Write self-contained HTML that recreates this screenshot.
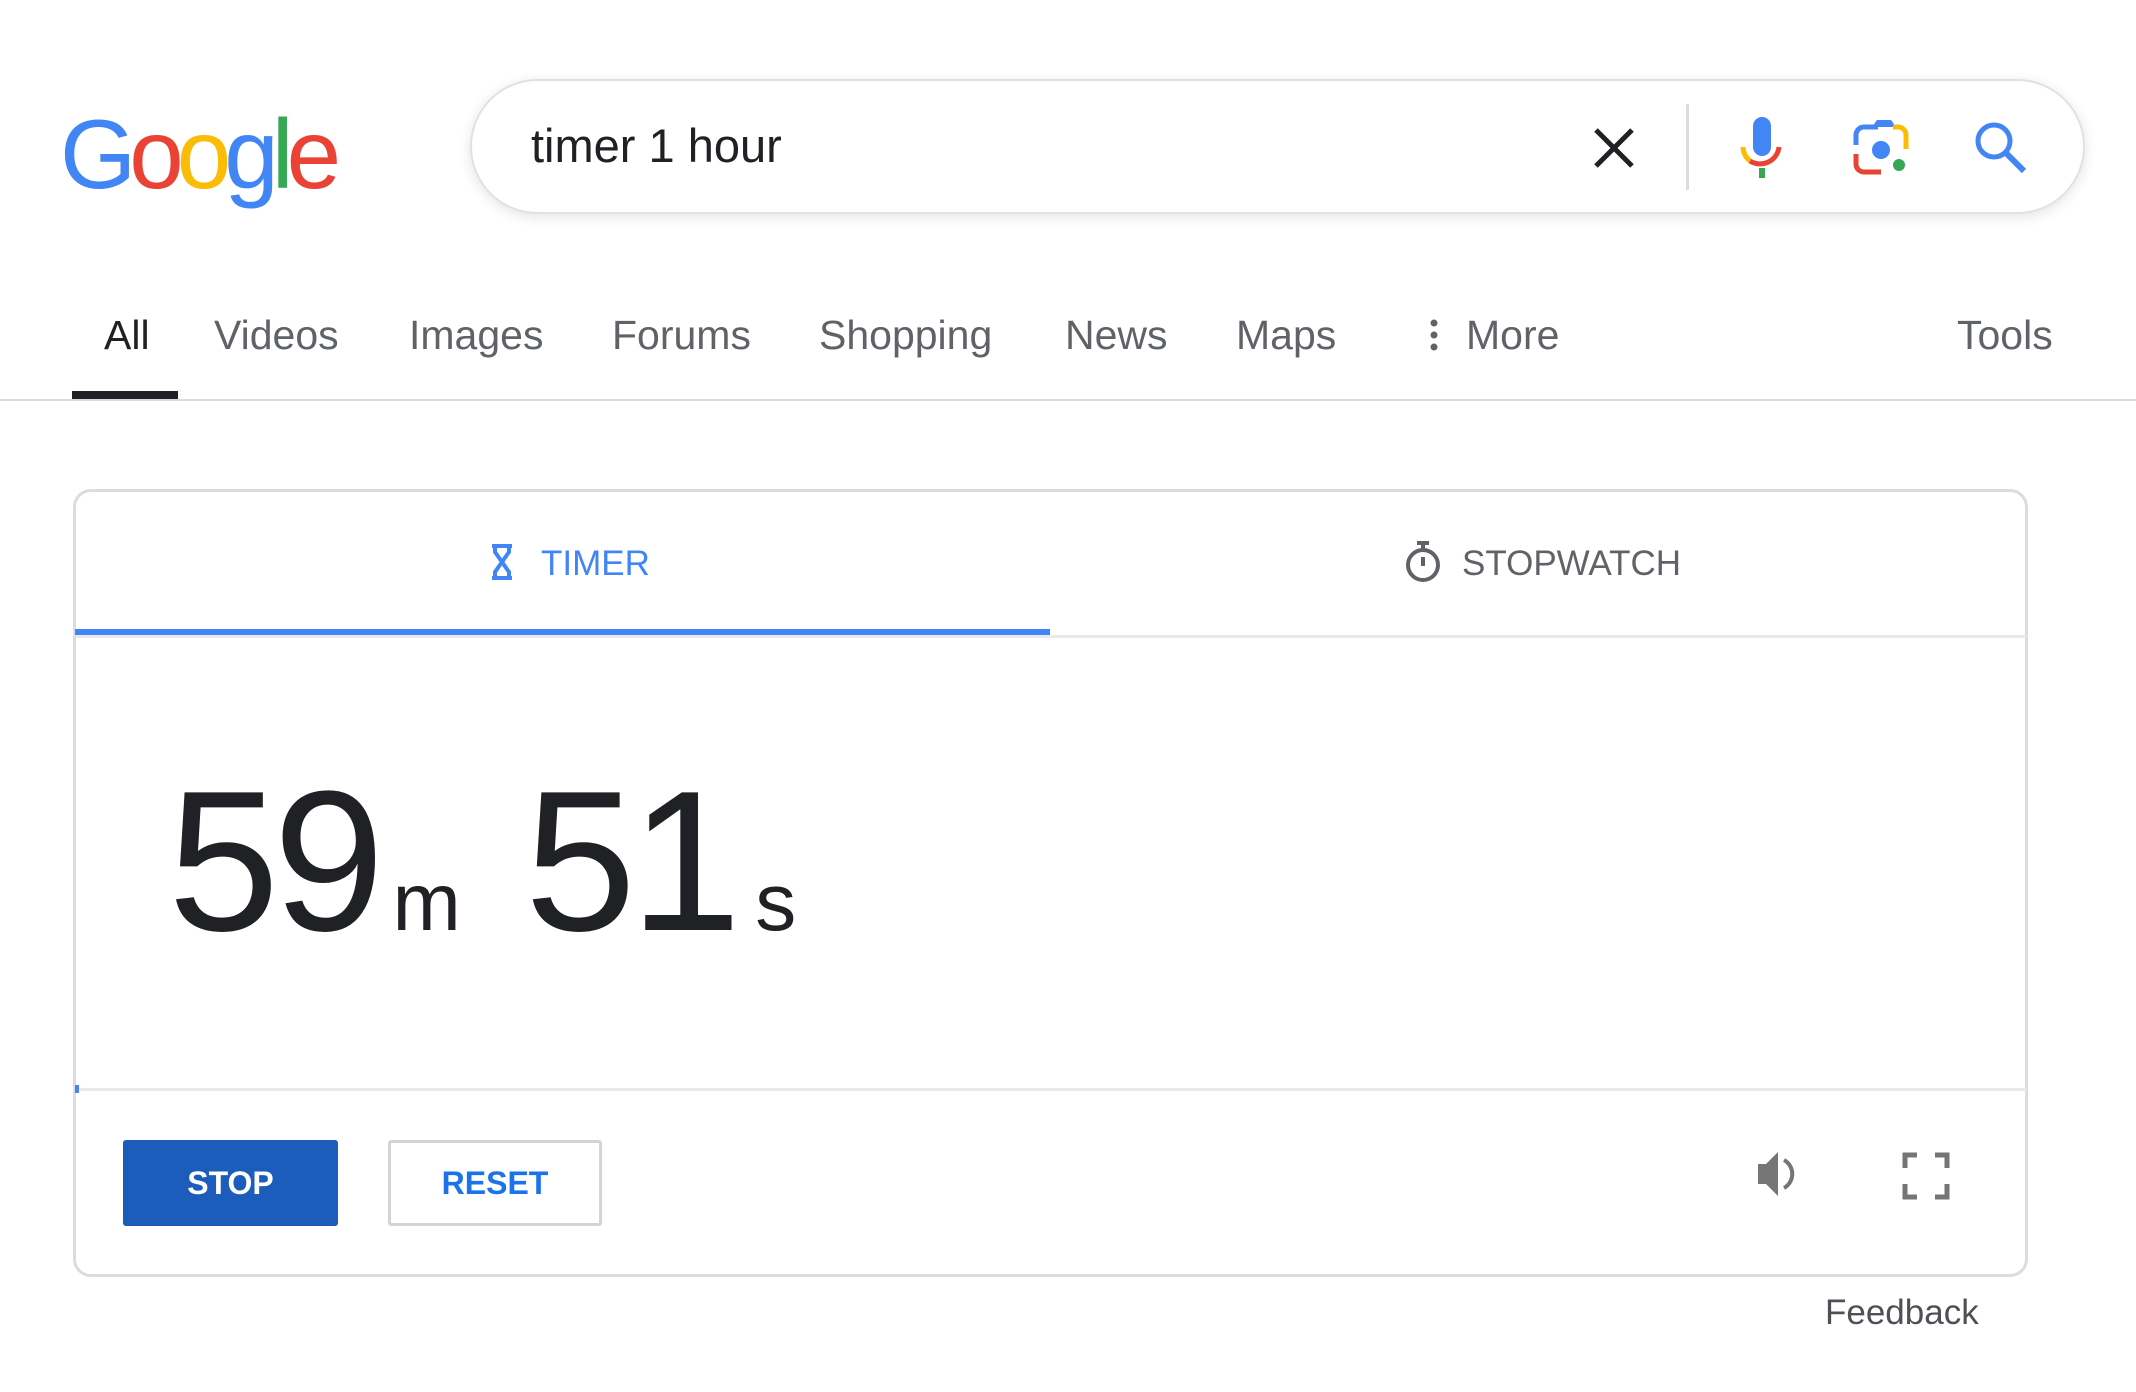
<!DOCTYPE html>
<html><head><meta charset="utf-8"><style>
*{margin:0;padding:0;box-sizing:border-box}
body{width:2136px;height:1392px;background:#fff;font-family:"Liberation Sans",Arial,sans-serif;position:relative;overflow:hidden}
.a{position:absolute;white-space:nowrap}
.tab{position:absolute;top:312px;font-size:41px;color:#5f6368;line-height:46px}
</style></head><body>
<div class="a" style="left:60px;top:96px;font-size:98px;letter-spacing:-7px;line-height:116px;font-weight:normal">
<span style="color:#4285f4">G</span><span style="color:#ea4335">o</span><span style="color:#fbbc05">o</span><span style="color:#4285f4">g</span><span style="color:#34a853">l</span><span style="color:#ea4335">e</span></div>
<div class="a" style="left:470px;top:79px;width:1615px;height:135px;border:2px solid #dfe1e5;border-radius:68px;box-shadow:0 3px 12px rgba(32,33,36,.12)"></div>
<div class="a" style="left:531px;top:118px;font-size:47px;color:#202124;line-height:56px">timer 1 hour</div>
<svg class="a" style="left:0;top:0" width="2136" height="400">
<path d="M1596 130L1632 166M1632 130L1596 166" stroke="#202124" stroke-width="5"/>
<rect x="1686" y="104" width="3" height="86" fill="#dadce0"/>
<rect x="1753" y="117" width="18" height="39" rx="9" fill="#4285f4"/>
<path d="M1743 147a19 19 0 0 0 7 14" stroke="#fbbc05" stroke-width="5" fill="none"/>
<path d="M1750 161a19 19 0 0 0 29 -14" stroke="#ea4335" stroke-width="5" fill="none"/>
<rect x="1759" y="168" width="6" height="10" fill="#34a853"/>
<path d="M1856 145v-10a8 8 0 0 1 8-8h14" stroke="#4285f4" stroke-width="5" fill="none"/>
<path d="M1872 127l5-7h14l5 7z" fill="#4285f4"/>
<path d="M1893 127h5a8 8 0 0 1 8 8v14" stroke="#fbbc05" stroke-width="5" fill="none"/>
<path d="M1856 154v10a8 8 0 0 0 8 8h17" stroke="#ea4335" stroke-width="5" fill="none"/>
<circle cx="1881" cy="150" r="9" fill="#4285f4"/>
<circle cx="1899" cy="165" r="6" fill="#34a853"/>
<circle cx="1994" cy="141" r="16" stroke="#4285f4" stroke-width="5" fill="none"/>
<path d="M2006 153l18 18" stroke="#4285f4" stroke-width="6"/>
</svg>
<div class="tab" style="left:104px;color:#202124">All</div>
<div class="tab" style="left:214px">Videos</div>
<div class="tab" style="left:409px">Images</div>
<div class="tab" style="left:612px">Forums</div>
<div class="tab" style="left:819px">Shopping</div>
<div class="tab" style="left:1065px">News</div>
<div class="tab" style="left:1236px">Maps</div>
<svg class="a" style="left:1428px;top:318px" width="12" height="36"><circle cx="6" cy="5" r="3.5" fill="#5f6368"/><circle cx="6" cy="17" r="3.5" fill="#5f6368"/><circle cx="6" cy="29" r="3.5" fill="#5f6368"/></svg>
<div class="tab" style="left:1466px">More</div>
<div class="tab" style="left:1957px">Tools</div>
<div class="a" style="left:72px;top:391px;width:106px;height:8px;background:#202124"></div>
<div class="a" style="left:0;top:399px;width:2136px;height:2px;background:#dadce0"></div>

<div class="a" style="left:73px;top:489px;width:1955px;height:788px;border:3px solid #dadce0;border-radius:18px"></div>
<svg class="a" style="left:488px;top:543px" width="28" height="38"><path d="M4 3h20M4 35h20M7 3v6l7 10-7 10v6M21 3v6l-7 10 7 10v6" stroke="#4285f4" stroke-width="4" fill="none"/></svg>
<div class="a" style="left:541px;top:544px;font-size:35px;color:#4285f4;line-height:40px">TIMER</div>
<svg class="a" style="left:1404px;top:540px" width="38" height="44"><path d="M13 3h12M19 3v6" stroke="#5f6368" stroke-width="4"/><circle cx="19" cy="25" r="15" stroke="#5f6368" stroke-width="4" fill="none"/><path d="M19 17v9" stroke="#5f6368" stroke-width="4"/></svg>
<div class="a" style="left:1462px;top:544px;font-size:35px;color:#5f6368;line-height:40px">STOPWATCH</div>
<div class="a" style="left:76px;top:635px;width:1950px;height:3px;background:#e8eaed"></div>
<div class="a" style="left:75px;top:629px;width:975px;height:6px;background:#4285f4"></div>

<div class="a" style="left:168px;top:752px;font-size:200px;color:#202124;line-height:220px;letter-spacing:-6px">59<span style="font-size:82px;letter-spacing:0;margin:0 64px 0 14px">m</span>51<span style="font-size:82px;letter-spacing:0;margin-left:20px">s</span></div>

<div class="a" style="left:76px;top:1088px;width:1950px;height:3px;background:#e8eaed"></div>
<div class="a" style="left:75px;top:1085px;width:4px;height:8px;background:#4285f4"></div>

<div class="a" style="left:123px;top:1140px;width:215px;height:86px;background:#1c5dbb;border-radius:3px;color:#fff;font-weight:bold;font-size:32px;line-height:86px;text-align:center">STOP</div>
<div class="a" style="left:388px;top:1140px;width:214px;height:86px;border:3px solid #d4d4d4;border-radius:3px;color:#1a73e8;font-weight:bold;font-size:32px;line-height:80px;text-align:center">RESET</div>
<svg class="a" style="left:1754px;top:1146px" width="50" height="56"><path d="M4 18h8l12-12v44l-12-12h-8z" fill="#757575"/><path d="M30 14a16 16 0 0 1 0 28" stroke="#757575" stroke-width="4" fill="none"/></svg>
<svg class="a" style="left:1902px;top:1152px" width="48" height="48"><path d="M3 16V3h12M33 3h12v13M3 32v13h12M33 45h12V32" stroke="#757575" stroke-width="5" fill="none"/></svg>
<div class="a" style="left:1825px;top:1293px;font-size:35px;color:#4d5156;line-height:40px">Feedback</div>
</body></html>
